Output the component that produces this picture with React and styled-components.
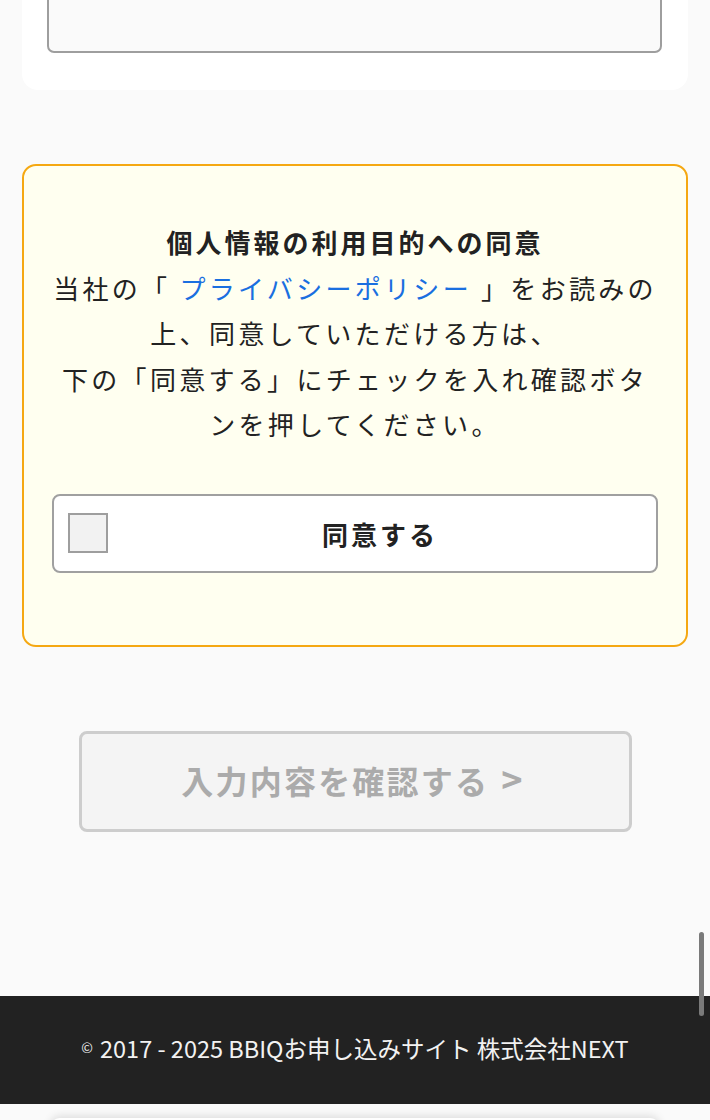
import React from "react";
import styled, { createGlobalStyle } from "styled-components";

const GlobalStyle = createGlobalStyle`
  html, body {
    margin: 0;
    padding: 0;
    background: #fafafa;
    font-family: "Noto Sans CJK JP", "Noto Sans", sans-serif;
    color: #222;
  }
  body {
    height: 1120px;
    overflow: hidden;
  }
`;

const Page = styled.div`
  position: relative;
  display: flex;
  flex-direction: column;
  height: 1120px;
  overflow: hidden;
`;

const Main = styled.main`
  display: flex;
  flex-direction: column;
  padding: 0 22px;
`;

const FormCard = styled.section`
  margin-top: -80px;
  padding: 20px 26px 37px 25px;
  background: #fff;
  border-radius: 16px;
`;

const TextBox = styled.div`
  height: 113px;
  box-sizing: border-box;
  border: 2px solid #9e9e9e;
  border-radius: 7px;
  background: #fafafa;
`;

const ConsentBox = styled.section`
  margin-top: 74px;
  box-sizing: border-box;
  height: 483px;
  padding: 53px 28px 0;
  background: #fffff0;
  border: 2px solid #f5a812;
  border-radius: 14px;
  display: flex;
  flex-direction: column;
  align-items: center;
`;

const Notice = styled.p`
  margin: 0;
  width: 100%;
  text-align: center;
  font-size: 26px;
  line-height: 45.5px;
  letter-spacing: ${(p) => (p.$bold ? "3px" : "3.3px")};
  font-weight: ${(p) => (p.$bold ? 700 : 400)};
  color: #222;
`;

const PolicyLink = styled.a`
  color: #1a6fe0;
  text-decoration: none;
`;

const AgreeRow = styled.label`
  margin-top: 47px;
  width: 100%;
  box-sizing: border-box;
  height: 79px;
  display: flex;
  align-items: center;
  padding: 0 4px 0 14px;
  background: #fff;
  border: 2px solid #a0a0a0;
  border-radius: 8px;
`;

const CheckBox = styled.span`
  width: 40px;
  height: 40px;
  box-sizing: border-box;
  border: 2px solid #9e9e9e;
  background: #f2f2f2;
  flex-shrink: 0;
`;

const AgreeText = styled.span`
  flex: 1;
  text-align: center;
  font-size: 26px;
  font-weight: 700;
  letter-spacing: 3px;
  color: #222;
`;

const ConfirmButton = styled.button`
  margin: 84px auto 0;
  width: 553px;
  height: 101px;
  box-sizing: border-box;
  border: 3px solid #cdcdcd;
  border-radius: 8px;
  background: #f4f4f4;
  color: #ababab;
  font-family: "Noto Sans CJK JP", "Noto Sans", sans-serif;
  font-size: 32px;
  font-weight: 700;
  letter-spacing: 2.2px;
  padding: 0 4px 8px 0;
`;

const Chevron = styled.span`
  font-size: 36px;
  margin-left: 12px;
`;

const Footer = styled.footer`
  margin-top: 164px;
  height: 108px;
  padding-bottom: 4px;
  box-sizing: border-box;
  background: #222;
  color: #f2f2f2;
  display: flex;
  align-items: center;
  justify-content: center;
  font-size: 23.5px;
  font-weight: 400;
`;

const Copy = styled.span`
  font-size: 14px;
  margin-right: 7px;
  position: relative;
  top: -1px;
`;

const BottomBar = styled.div`
  height: 16px;
  background: #fafafa;
  position: relative;
  &::after {
    content: "";
    position: absolute;
    left: 50px;
    right: 50px;
    top: 14px;
    height: 20px;
    border-radius: 10px;
    background: #fff;
    box-shadow: 0 -2px 8px rgba(0, 0, 0, 0.12);
  }
`;

const ScrollThumb = styled.div`
  position: absolute;
  right: 6px;
  top: 932px;
  width: 5px;
  height: 84px;
  border-radius: 3px;
  background: #7a7a7a;
`;

export default function App() {
  return (
    <Page>
      <GlobalStyle />
      <Main>
        <FormCard>
          <TextBox />
        </FormCard>

        <ConsentBox>
          <Notice $bold>個人情報の利用目的への同意</Notice>
          <Notice>
            当社の「 <PolicyLink href="#">プライバシーポリシー</PolicyLink> 」をお読みの
            <br />
            上、同意していただける方は、
            <br />
            下の「同意する」にチェックを入れ確認ボタ
            <br />
            ンを押してください。
          </Notice>
          <AgreeRow>
            <CheckBox />
            <AgreeText>同意する</AgreeText>
          </AgreeRow>
        </ConsentBox>

        <ConfirmButton disabled>
          入力内容を確認する<Chevron>&gt;</Chevron>
        </ConfirmButton>
      </Main>

      <Footer>
        <Copy>©</Copy>2017 - 2025 BBIQお申し込みサイト 株式会社NEXT
      </Footer>
      <BottomBar />
      <ScrollThumb />
    </Page>
  );
}
